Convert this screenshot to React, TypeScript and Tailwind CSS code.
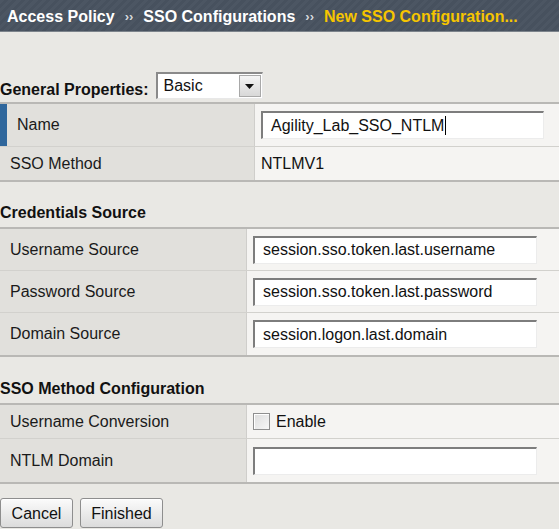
import React from 'react'

const font = "font-['Liberation_Sans',Arial,sans-serif]"

function Crumb({ children, last }: { children: React.ReactNode; last?: boolean }) {
  return <span className={last ? 'text-[#f6c500]' : 'text-white'}>{children}</span>
}

function Sep() {
  return <span className="mx-[10px] text-[13px] text-[#d7d9dc]">››</span>
}

function TextInput({ value, width = 'w-[284px]', cursor }: { value?: string; width?: string; cursor?: boolean }) {
  return (
    <div
      className={`${width} h-[28px] bg-white border-t-2 border-l-2 border-t-[#7d7d7d] border-l-[#7d7d7d] border-r border-b border-r-[#ececec] border-b-[#ececec] flex items-center pl-[8px] text-[16px] text-[#111]`}
    >
      {value}
      {cursor && <span className="w-px h-[19px] bg-black ml-px" />}
    </div>
  )
}

function Row({
  label,
  children,
  col,
  h,
  marker,
  last,
}: {
  label: string
  children: React.ReactNode
  col: string
  h: string
  marker?: boolean
  last?: boolean
}) {
  return (
    <div className={`grid ${col} ${h} ${last ? '' : 'border-b border-[#d2d1cd]'}`}>
      <div className="flex items-stretch bg-[#e1e0dc] border-r border-[#cfcecb]">
        {marker && <div className="w-[7px] bg-[#2f679c]" />}
        <div className="flex items-center pl-[10px] text-[16px] text-[#1a1a1a]">{label}</div>
      </div>
      <div className="flex items-center bg-[#f5f4f2] pl-[6px]">{children}</div>
    </div>
  )
}

function Table({ children }: { children: React.ReactNode }) {
  return <div className="border-t-2 border-b-2 border-[#b9b8b5]">{children}</div>
}

function Heading({ children, pt }: { children: React.ReactNode; pt: string }) {
  return (
    <div className={`${pt} pb-[5px]`}>
      <div className="h-[18px] flex items-center text-[16px] font-bold text-[#111]">{children}</div>
    </div>
  )
}

function Button({ children, w }: { children: React.ReactNode; w: string }) {
  return (
    <button
      className={`${w} h-[30px] pt-[2px] rounded-[3px] border border-[#8e8e8e] bg-gradient-to-b from-[#fbfbfb] to-[#dcdcdc] text-[16px] text-[#111] shadow-[inset_0_1px_0_#fff]`}
    >
      {children}
    </button>
  )
}

export default function App() {
  return (
    <div className={`min-h-screen w-full bg-[#e9e8e4] ${font}`}>
      <div className="h-[32px] flex items-center pl-[7px] pt-[3px] text-[16px] font-bold border-b border-[#7c838b] bg-[repeating-linear-gradient(135deg,#4c5663_0px,#4c5663_3px,#47515e_3px,#47515e_6px)]">
        <Crumb>Access Policy</Crumb>
        <Sep />
        <Crumb>SSO Configurations</Crumb>
        <Sep />
        <Crumb last>New SSO Configuration...</Crumb>
      </div>

      <div className="pt-[40px] flex items-end">
        <span className="text-[16px] leading-[18px] font-bold text-[#111]">General Properties:</span>
        <div className="ml-[7px] w-[107px] h-[27px] bg-white border-t-2 border-l-2 border-t-[#8a8a8a] border-l-[#8a8a8a] border-r border-b border-r-[#e8e8e8] border-b-[#e8e8e8] flex items-stretch">
          <div className="flex-1 flex items-center pl-[6px] text-[16px] text-[#111]">Basic</div>
          <div className="w-[22px] my-[1px] mr-[1px] bg-gradient-to-b from-[#f4f4f4] to-[#d8d8d8] border border-[#a8a8a8] flex items-center justify-center">
            <svg width="9" height="5" viewBox="0 0 9 5">
              <path d="M0 0h9L4.5 5z" fill="#111" />
            </svg>
          </div>
        </div>
      </div>

      <div className="mt-[3px]">
        <Table>
          <Row label="Name" col="grid-cols-[255px_1fr]" h="h-[43px]" marker>
            <TextInput value="Agility_Lab_SSO_NTLM" width="w-[283px]" cursor />
          </Row>
          <Row label="SSO Method" col="grid-cols-[255px_1fr]" h="h-[33px]" last>
            <span className="text-[16px] text-[#111]">NTLMV1</span>
          </Row>
        </Table>
      </div>

      <Heading pt="pt-[22px]">Credentials Source</Heading>
      <Table>
        <Row label="Username Source" col="grid-cols-[247px_1fr]" h="h-[42px]">
          <TextInput value="session.sso.token.last.username" />
        </Row>
        <Row label="Password Source" col="grid-cols-[247px_1fr]" h="h-[42px]">
          <TextInput value="session.sso.token.last.password" />
        </Row>
        <Row label="Domain Source" col="grid-cols-[247px_1fr]" h="h-[42px]" last>
          <TextInput value="session.logon.last.domain" />
        </Row>
      </Table>

      <Heading pt="pt-[23px]">SSO Method Configuration</Heading>
      <Table>
        <Row label="Username Conversion" col="grid-cols-[247px_1fr]" h="h-[34px]">
          <div className="flex items-center gap-[6px]">
            <div className="w-[17px] h-[17px] border border-[#8f8f8f] bg-gradient-to-br from-[#dcdcdc] to-[#f7f7f7] shadow-[inset_1px_1px_0_#fff]" />
            <span className="text-[16px] text-[#111]">Enable</span>
          </div>
        </Row>
        <Row label="NTLM Domain" col="grid-cols-[247px_1fr]" h="h-[43px]" last>
          <TextInput width="w-[284px]" />
        </Row>
      </Table>

      <div className="pt-[14px] flex gap-[7px]">
        <Button w="w-[73px]">Cancel</Button>
        <Button w="w-[83px]">Finished</Button>
      </div>
    </div>
  )
}
